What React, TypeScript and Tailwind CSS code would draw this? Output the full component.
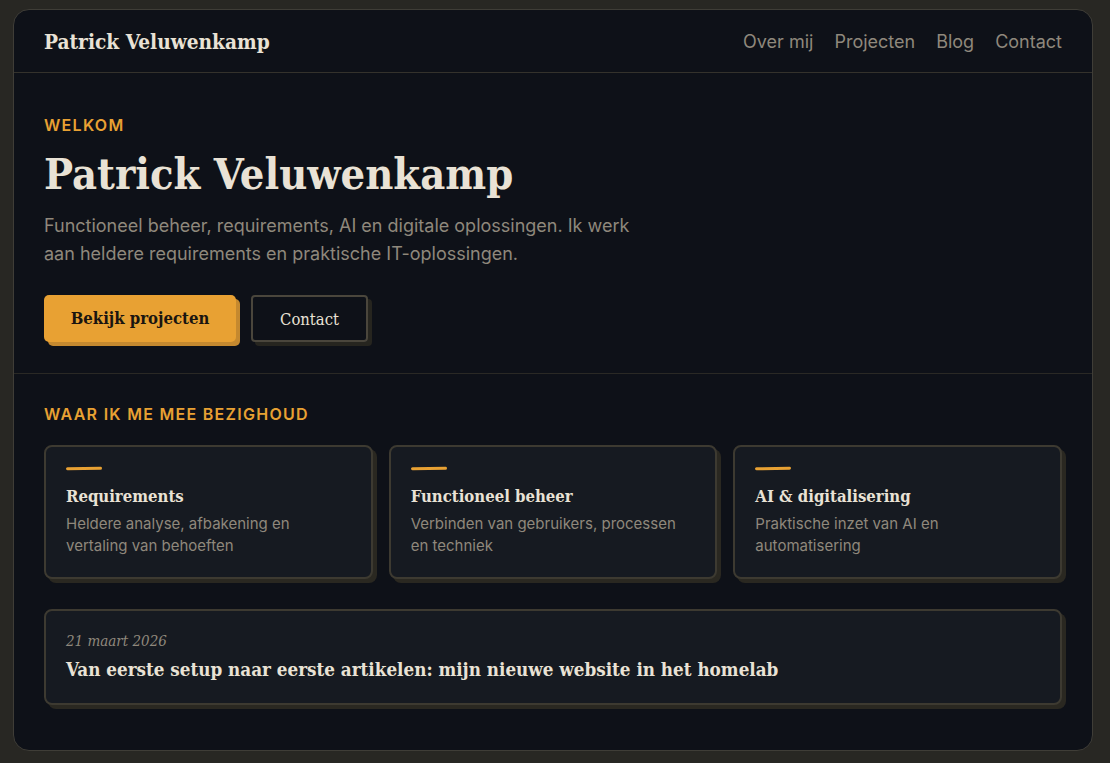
const serif = 'font-["DejaVu_Serif_Condensed","Noto_Serif","DejaVu_Serif",serif]';

const focus = [
  { title: 'Requirements', text: 'Heldere analyse, afbakening en vertaling van behoeften' },
  { title: 'Functioneel beheer', text: 'Verbinden van gebruikers, processen en techniek' },
  { title: 'AI & digitalisering', text: 'Praktische inzet van AI en automatisering' },
];

export default function App() {
  return (
    <div className="min-h-[763px] bg-[#282723] pt-[9px] pb-[12px] pl-[13px] font-['Inter','Noto_Sans',sans-serif]">
      <div className="w-[1080px] h-[742px] rounded-[16px] border border-[#3f3d37] bg-[#0e1118] overflow-hidden">
        {/* Header */}
        <header className="h-[63px] flex items-center justify-between px-[30px] border-b border-[#34322c]">
          <span className={`${serif} mt-[3px] text-[20.7px] font-bold text-[#e9e2d5]`}>Patrick Veluwenkamp</span>
          <nav className="flex gap-[21px] text-[18px] text-[#8f887c]">
            <span>Over mij</span>
            <span>Projecten</span>
            <span>Blog</span>
            <span>Contact</span>
          </nav>
        </header>

        {/* Hero */}
        <section className="px-[30px] pt-[42px] pb-[31px] border-b border-[#2a2925]">
          <p className="text-[16px] font-semibold tracking-[0.08em] text-[#e8a133] leading-[20px]">WELKOM</p>
          <h1 className={`${serif} mt-[9px] text-[43px] font-bold leading-[60px] text-[#e9e2d5]`}>Patrick Veluwenkamp</h1>
          <p className="mt-[8px] max-w-[600px] text-[18px] leading-[28px] text-[#8f887c]">
            Functioneel beheer, requirements, AI en digitale oplossingen. Ik werk aan heldere requirements en praktische IT-oplossingen.
          </p>
          <div className="mt-[27px] flex gap-[15px]">
            <button className={`${serif} h-[47px] w-[192px] rounded-[5px] bg-[#e8a133] text-[16.6px] font-bold text-[#1a1510] shadow-[4px_4px_0_#c5892f]`}>
              Bekijk projecten
            </button>
            <button className={`${serif} h-[47px] w-[117px] rounded-[4px] border-2 border-[#4a463c] pt-[4px] text-[16.5px] text-[#e9e2d5] shadow-[4px_4px_0_#26251f]`}>
              Contact
            </button>
          </div>
        </section>

        {/* Focus */}
        <section className="px-[30px] pt-[30px] pb-[44px]">
          <h2 className="text-[16px] font-semibold tracking-[0.08em] text-[#e8a133] leading-[20px]">WAAR IK ME MEE BEZIGHOUD</h2>
          <div className="mt-[21px] grid grid-cols-3 gap-[16px]">
            {focus.map((f) => (
              <div
                key={f.title}
                className="h-[134px] rounded-[8px] border-2 border-[#3d3a31] bg-[#161a21] px-[20px] pt-[20px] shadow-[4px_4px_0_#2a2821]"
              >
                <div className="h-[3px] w-[36px] rounded-full bg-[#e8a133] -rotate-1" />
                <h3 className={`${serif} mt-[14px] text-[16.6px] font-bold leading-[24px] text-[#e9e2d5]`}>{f.title}</h3>
                <p className="mt-[5px] text-[15px] leading-[22px] text-[#8f887c]">{f.text}</p>
              </div>
            ))}
          </div>

          <div className="mt-[30px] h-[96px] rounded-[8px] border-2 border-[#3d3a31] bg-[#161a21] px-[20px] pt-[18px] shadow-[4px_4px_0_#2a2821]">
            <p className={`${serif} text-[15px] italic leading-[24px] text-[#8f887c]`}>21 maart 2026</p>
            <h3 className={`${serif} mt-[1px] text-[18.7px] font-bold leading-[30px] text-[#e9e2d5]`}>
              Van eerste setup naar eerste artikelen: mijn nieuwe website in het homelab
            </h3>
          </div>
        </section>
      </div>
    </div>
  );
}
